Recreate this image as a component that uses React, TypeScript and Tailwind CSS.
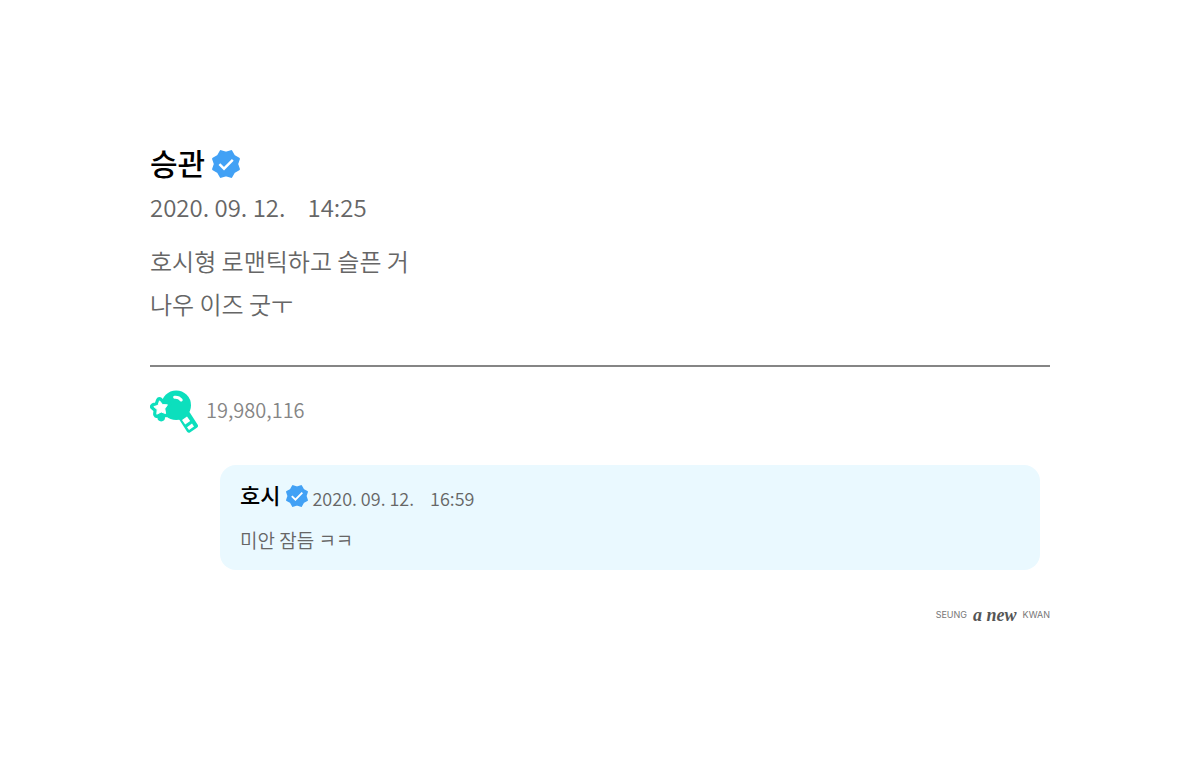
import { FC } from "react";

const FONT = "font-['Noto_Sans_CJK_KR','Noto_Sans',sans-serif]";

const STAR =
  "M9.5 10.8 L12.6 14.6 L17.4 14.8 L14.8 18.8 L15.6 23.6 L11.2 22 L6.8 24.2 L7.2 19.6 L3.8 16.6 L8 15.4Z";

const VerifiedBadge: FC<{ className: string }> = ({ className }) => (
  <svg viewBox="0 0 28 28" className={className} role="img" aria-label="Verified">
    <path
      d="M8.8 1.3 L14 3 L19.2 1.3 L21.9 6.1 L26.7 8.8 L25 14 L26.7 19.2 L21.9 21.9 L19.2 26.7 L14 25 L8.8 26.7 L6.1 21.9 L1.3 19.2 L3 14 L1.3 8.8 L6.1 6.1Z"
      fill="#42a1f5"
      stroke="#42a1f5"
      strokeWidth="2.4"
      strokeLinejoin="round"
    />
    <path d="M7.4 14.2 L12 18.7 L20.8 9.8" fill="none" stroke="#fff" strokeWidth="2.4" />
  </svg>
);

const LightStick: FC = () => (
  <svg viewBox="0 0 48 43" className="h-[43px] w-12" aria-hidden="true">
    <g fill="#0cdfbd" stroke="#0cdfbd" strokeLinejoin="round">
      <circle cx="26.2" cy="15.2" r="14.8" stroke="none" />
      <path d={STAR} strokeWidth="7.4" />
      <circle cx="11.2" cy="27.6" r="3.8" stroke="none" />
      <path d="M31 28 L38 24 L45.6 35.8 L39 40.4Z" strokeWidth="4.6" />
    </g>
    <path d={STAR} fill="#fff" stroke="#fff" strokeLinejoin="round" />
    <path d="M24.6 7.2 Q28.8 6.8 31.2 10" fill="none" stroke="#fff" strokeWidth="3" strokeLinecap="round" />
    <path d="M32 30 L37 26.4 L40.2 31 L35.2 34.6Z M37 37.2 L42 33.6 L44 36.4 L39 40Z" fill="#fff" />
  </svg>
);

const Timestamp: FC<{ date: string; time: string; className: string }> = ({
  date,
  time,
  className,
}) => (
  <time className={`flex font-[350] text-[#666] ${className}`}>
    <span>{date}</span>
    <span>{time}</span>
  </time>
);

const App: FC = () => (
  <main className={`min-h-screen bg-white px-[150px] pt-[142px] pb-20 ${FONT}`}>
    <article>
      <header>
        <div className="flex items-end gap-[7px]">
          <h1 className="text-[30px] leading-10 font-medium text-black">승관</h1>
          <VerifiedBadge className="mb-1 size-7" />
        </div>
        <Timestamp
          date="2020. 09. 12."
          time="14:25"
          className="mt-[9px] gap-[22px] text-2xl leading-8"
        />
      </header>
      <p className="mt-4 text-2xl leading-[43px] font-[350] text-[#666]">
        호시형 로맨틱하고 슬픈 거
        <br />
        나우 이즈 굿ㅜ
      </p>
      <div className="mt-10 flex items-start gap-2 border-t-2 border-[#858585] pt-[23px]">
        <LightStick />
        <span className="mt-1 text-xl leading-8 font-[350] text-[#858585]">19,980,116</span>
      </div>
    </article>

    <section className="mt-8 mr-[10px] ml-[70px] rounded-2xl bg-[#eaf9ff] px-5 pt-[13px] pb-4">
      <div className="flex items-end">
        <h2 className="mr-[6px] text-[22px] leading-8 font-medium text-black">호시</h2>
        <VerifiedBadge className="mb-[3px] size-[22px]" />
        <Timestamp
          date="2020. 09. 12."
          time="16:59"
          className="ml-1 gap-4 text-lg leading-6"
        />
      </div>
      <p className="mt-4 text-[19px] leading-7 font-[350] text-[#666]">미안 잠듬 ㅋㅋ</p>
    </section>

    <footer className="mt-[33px] flex items-center justify-end gap-[6px] font-['Inter',sans-serif] text-[9px] leading-6 text-[#777]">
      <span>SEUNG</span>
      <span className="font-['Liberation_Serif',serif] text-lg leading-6 font-bold text-[#555] italic">
        a new
      </span>
      <span>KWAN</span>
    </footer>
  </main>
);

export default App;
